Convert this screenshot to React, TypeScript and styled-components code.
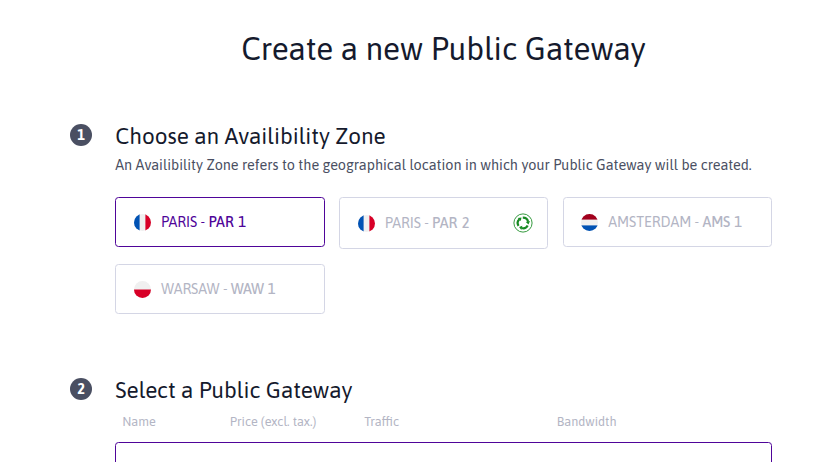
import React from "react";
import styled, { createGlobalStyle } from "styled-components";

const GlobalStyle = createGlobalStyle`
  * { box-sizing: border-box; }
  body {
    margin: 0;
    background: #fff;
    color: #151a2d;
    font-family: Asap, "Noto Sans", sans-serif;
    overflow: hidden;
  }
`;

const Page = styled.main`
  height: 462px;
  padding: 24px 56px 0 70px;
  overflow: hidden;
`;

const Title = styled.h1`
  margin: 0 0 46px;
  padding-left: 45px;
  height: 50px;
  font-size: 31.5px;
  line-height: 50px;
  font-weight: 400;
  text-align: center;
  white-space: nowrap;
`;

const Step = styled.section<{ $height: number }>`
  display: grid;
  grid-template-columns: 45.3px 1fr;
  align-items: start;
  height: ${(p) => p.$height}px;
`;

const StepNumber = styled.span`
  display: flex;
  align-items: center;
  justify-content: center;
  width: 22px;
  height: 22px;
  margin-top: 4.3px;
  border-radius: 50%;
  background: #4a4f62;
  color: #fff;
  font-size: 14.4px;
  line-height: 22px;
  font-weight: 700;
`;

const StepBody = styled.div`
  min-width: 0;
`;

const StepTitle = styled.h2`
  margin: 0;
  height: 32px;
  font-size: 22.5px;
  line-height: 32px;
  font-weight: 400;
  white-space: nowrap;
`;

const Description = styled.p`
  margin: 3px 0 22px;
  color: #4a4f62;
  font-size: 14.4px;
  line-height: 20px;
  white-space: nowrap;
`;

const Zones = styled.div`
  display: grid;
  grid-template-columns: repeat(3, 1fr);
  align-items: start;
  gap: 15px 14.2px;
`;

const ZoneCard = styled.button<{ $selected?: boolean; $tall?: boolean }>`
  display: flex;
  align-items: center;
  height: ${(p) => (p.$tall ? 52 : 50)}px;
  padding: 0 14px 0 17.6px;
  border: 1px solid ${(p) => (p.$selected ? "#4f0599" : "#d4d6e5")};
  border-radius: 3.5px;
  background: #fff;
  color: ${(p) => (p.$selected ? "#4f0599" : "#b3b5c4")};
  font: 400 14.4px/20px Asap, "Noto Sans", sans-serif;
  white-space: nowrap;
`;

const ZoneName = styled.span`
  flex: 1;
  margin: -1px 0 0 10.2px;
  text-align: left;
  letter-spacing: -0.08px;
`;

const ZoneCode = styled.span<{ $spacing: number }>`
  font-weight: 500;
  letter-spacing: ${(p) => p.$spacing}px;
  word-spacing: 1px;
`;

const Columns = styled.div`
  display: grid;
  grid-template-columns: 107.5px 134.5px 192.5px 1fr;
  margin: 7px 0 11px;
  padding-left: 7px;
  color: #b3b5c4;
  font-size: 12.6px;
  line-height: 18px;
  white-space: nowrap;
`;

const OfferCard = styled.div`
  height: 70px;
  border: 1px solid #4f0599;
  border-radius: 3.5px;
`;

type Country = "fr" | "nl" | "pl";

function Flag({ country }: { country: Country }) {
  const clip = React.useId();
  return (
    <svg width="17" height="17" viewBox="0 0 17 17" aria-hidden>
      <clipPath id={clip}>
        <circle cx="8.5" cy="8.5" r="8.5" />
      </clipPath>
      <g clipPath={`url(#${clip})`}>
        <rect width="17" height="17" fill="#f0f0f0" />
        {country === "fr" && (
          <>
            <rect width="5.6" height="17" fill="#0052b4" />
            <rect x="11.4" width="5.6" height="17" fill="#d80027" />
          </>
        )}
        {country === "nl" && (
          <>
            <rect width="17" height="5.6" fill="#a2001d" />
            <rect y="11.4" width="17" height="5.6" fill="#0052b4" />
          </>
        )}
        {country === "pl" && <rect y="8.5" width="17" height="8.5" fill="#d80027" />}
      </g>
    </svg>
  );
}

function EcoBadge() {
  return (
    <svg width="20" height="20" viewBox="0 0 20 20" aria-hidden>
      <circle cx="10" cy="10" r="9.1" fill="none" stroke="#1f8f2a" strokeWidth="0.9" />
      {[0, 120, 240].map((angle) => (
        <g key={angle} transform={`rotate(${angle} 10 10)`}>
          <path d="M9.8 4.7A5.3 5.3 0 0 1 15.1 8.8" fill="none" stroke="#178a22" strokeWidth="2.2" />
          <path d="M12.8 9.1L17 7.9L15.5 11.4Z" fill="#178a22" />
        </g>
      ))}
    </svg>
  );
}

interface Zone {
  country: Country;
  city: string;
  code: string;
  spacing: number;
  selected?: boolean;
  eco?: boolean;
}

const zones: Zone[] = [
  { country: "fr", city: "PARIS", code: "PAR 1", spacing: 0, selected: true },
  { country: "fr", city: "PARIS", code: "PAR 2", spacing: 0, eco: true },
  { country: "nl", city: "AMSTERDAM", code: "AMS 1", spacing: -0.2 },
  { country: "pl", city: "WARSAW", code: "WAW 1", spacing: -0.4 },
];

export default function App() {
  return (
    <>
      <GlobalStyle />
      <Page>
        <Title>Create a new Public Gateway</Title>
        <Step $height={254}>
          <StepNumber>1</StepNumber>
          <StepBody>
            <StepTitle>Choose an Availibility Zone</StepTitle>
            <Description>
              An Availibility Zone refers to the geographical location in which your Public Gateway
              will be created.
            </Description>
            <Zones>
              {zones.map((z) => (
                <ZoneCard key={z.code} $selected={z.selected} $tall={z.eco}>
                  <Flag country={z.country} />
                  <ZoneName>
                    {z.city} - <ZoneCode $spacing={z.spacing}>{z.code}</ZoneCode>
                  </ZoneName>
                  {z.eco && <EcoBadge />}
                </ZoneCard>
              ))}
            </Zones>
          </StepBody>
        </Step>
        <Step $height={100}>
          <StepNumber>2</StepNumber>
          <StepBody>
            <StepTitle>Select a Public Gateway</StepTitle>
            <Columns>
              <span>Name</span>
              <span>Price (excl. tax.)</span>
              <span>Traffic</span>
              <span>Bandwidth</span>
            </Columns>
            <OfferCard />
          </StepBody>
        </Step>
      </Page>
    </>
  );
}
